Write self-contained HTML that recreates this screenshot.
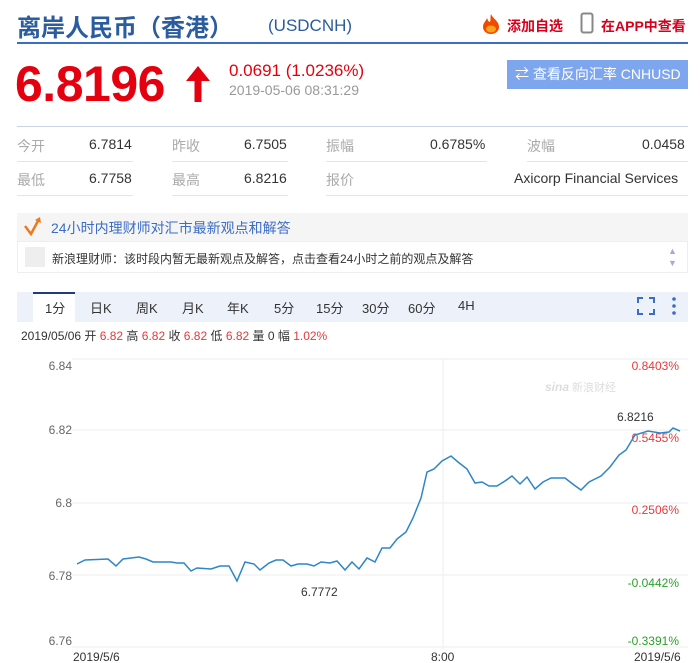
<!DOCTYPE html>
<html><head><meta charset="utf-8"><style>
*{margin:0;padding:0;box-sizing:border-box}
body{width:700px;height:663px;background:#fff;font-family:"Liberation Sans","Noto Sans CJK SC",sans-serif;position:relative;overflow:hidden}
.a{position:absolute;white-space:nowrap}
</style></head><body>
<div class="a" style="left:17px;top:8px;font-size:24px;font-weight:bold;color:#2a5c9f">离岸人民币（香港）</div>
<div class="a" style="left:268px;top:16px;font-size:17px;color:#2a5c9f">(USDCNH)</div>
<svg class="a" style="left:480px;top:13px" width="22" height="22" viewBox="0 0 22 22"><path d="M11 1C13 6 19 8 19 14A8 7 0 0 1 3 14C3 10 6 8 7 5C8 8 9 9 10 9C11 6 10 4 11 1Z" fill="#f04a00"/><ellipse cx="11" cy="16" rx="5" ry="3.5" fill="#f9a21b"/></svg>
<div class="a" style="left:507px;top:16px;font-size:14px;font-weight:bold;color:#d6001c">添加自选</div>
<svg class="a" style="left:580px;top:12px" width="14" height="22"><rect x="1.5" y="1.5" width="11" height="19" rx="2" fill="none" stroke="#888" stroke-width="2"/></svg>
<div class="a" style="left:601px;top:16px;font-size:14px;font-weight:bold;color:#d6001c">在APP中查看</div>
<div class="a" style="left:17px;top:42px;width:671px;height:2px;background:#3b6cc6"></div>
<div class="a" style="left:15px;top:55px;font-size:50px;font-weight:bold;color:#e4000f;letter-spacing:-0.5px">6.8196</div>
<svg class="a" style="left:182px;top:64px" width="32" height="40"><path d="M16 2L28 17H19.5V38H12.5V17H4Z" fill="#e4000f"/></svg>
<div class="a" style="left:229px;top:61px;font-size:17px;color:#e4000f">0.0691 (1.0236%)</div>
<div class="a" style="left:229px;top:82px;font-size:14px;color:#999">2019-05-06 08:31:29</div>
<div class="a" style="left:507px;top:60px;width:181px;height:29px;background:#7ea6ee;color:#fff;font-size:14px;line-height:29px;padding-left:8px">⇄ 查看反向汇率 CNHUSD</div>
<div class="a" style="left:17px;top:126px;width:671px;height:1px;background:#c9d3e3"></div>
<div style="font-size:14px">
<div class="a" style="left:17px;top:136px;color:#aaa">今开</div><div class="a" style="left:89px;top:136px;color:#333">6.7814</div>
<div class="a" style="left:172px;top:136px;color:#aaa">昨收</div><div class="a" style="left:244px;top:136px;color:#333">6.7505</div>
<div class="a" style="left:326px;top:136px;color:#aaa">振幅</div><div class="a" style="left:430px;top:136px;color:#333">0.6785%</div>
<div class="a" style="left:527px;top:136px;color:#aaa">波幅</div><div class="a" style="left:642px;top:136px;color:#333">0.0458</div>
<div class="a" style="left:17px;top:170px;color:#aaa">最低</div><div class="a" style="left:89px;top:170px;color:#333">6.7758</div>
<div class="a" style="left:172px;top:170px;color:#aaa">最高</div><div class="a" style="left:244px;top:170px;color:#333">6.8216</div>
<div class="a" style="left:326px;top:170px;color:#aaa">报价</div><div class="a" style="left:514px;top:170px;color:#333">Axicorp Financial Services</div>
</div>
<div class="a" style="left:17px;top:161px;width:116px;height:1px;background:#e5e5e5"></div>
<div class="a" style="left:172px;top:161px;width:116px;height:1px;background:#e5e5e5"></div>
<div class="a" style="left:326px;top:161px;width:161px;height:1px;background:#e5e5e5"></div>
<div class="a" style="left:527px;top:161px;width:161px;height:1px;background:#e5e5e5"></div>
<div class="a" style="left:17px;top:195px;width:116px;height:1px;background:#e5e5e5"></div>
<div class="a" style="left:172px;top:195px;width:116px;height:1px;background:#e5e5e5"></div>
<div class="a" style="left:326px;top:195px;width:362px;height:1px;background:#e5e5e5"></div>
<div class="a" style="left:17px;top:213px;width:671px;height:28px;background:#f5f5f5"></div>
<svg class="a" style="left:23px;top:216px" width="20" height="20"><path d="M2 10L8 18L16 3" fill="none" stroke="#f07a1a" stroke-width="2.5"/><path d="M12 4L17 1L18 7Z" fill="#f07a1a"/></svg>
<div class="a" style="left:51px;top:218px;font-size:14px;color:#3b6cc6">24小时内理财师对汇市最新观点和解答</div>
<div class="a" style="left:17px;top:241px;width:671px;height:32px;background:#fff;border:1px solid #eee"></div>
<div class="a" style="left:25px;top:247px;width:20px;height:20px;background:#eee"></div>
<div class="a" style="left:52px;top:250px;font-size:12px;color:#333">新浪理财师：该时段内暂无最新观点及解答，点击查看24小时之前的观点及解答</div>
<div class="a" style="left:668px;top:245px;font-size:9px;color:#aac;line-height:12px">▲<br>▼</div>
<div class="a" style="left:17px;top:292px;width:671px;height:30px;background:#edf2fa"></div>
<div class="a" style="left:33px;top:292px;width:42px;height:30px;background:#fff;border-top:2px solid #1c3f7c"></div>
<div style="font-size:13px;color:#333">
<div class="a" style="left:45px;top:298px">1分</div><div class="a" style="left:90px;top:298px">日K</div><div class="a" style="left:136px;top:298px">周K</div><div class="a" style="left:182px;top:298px">月K</div><div class="a" style="left:227px;top:298px">年K</div><div class="a" style="left:274px;top:298px">5分</div><div class="a" style="left:316px;top:298px">15分</div><div class="a" style="left:362px;top:298px">30分</div><div class="a" style="left:408px;top:298px">60分</div><div class="a" style="left:458px;top:298px">4H</div>
</div>
<svg class="a" style="left:636px;top:296px" width="20" height="20"><path d="M2 7V2H7M13 2H18V7M18 13V18H13M7 18H2V13" fill="none" stroke="#3b6cc6" stroke-width="2"/></svg>
<svg class="a" style="left:671px;top:296px" width="6" height="20"><circle cx="3" cy="3" r="1.8" fill="#3b6cc6"/><circle cx="3" cy="10" r="1.8" fill="#3b6cc6"/><circle cx="3" cy="17" r="1.8" fill="#3b6cc6"/></svg>
<div class="a" style="left:21px;top:327px;font-size:12px;color:#333">2019/05/06 开 <span style="color:#e4393c">6.82</span> 高 <span style="color:#e4393c">6.82</span> 收 <span style="color:#e4393c">6.82</span> 低 <span style="color:#e4393c">6.82</span> 量 0 幅 <span style="color:#e4393c">1.02%</span></div>
<svg class="a" style="left:0;top:350px" width="700" height="313" viewBox="0 350 700 313" font-family="Liberation Sans,sans-serif" font-size="12">
<g stroke="#eee" stroke-width="1"><line x1="72" y1="359" x2="688" y2="359"/><line x1="72" y1="430" x2="688" y2="430"/><line x1="72" y1="503" x2="688" y2="503"/><line x1="72" y1="575" x2="688" y2="575"/><line x1="72" y1="647" x2="688" y2="647"/><line x1="443" y1="359" x2="443" y2="650"/></g>
<g fill="#666" text-anchor="end"><text x="72" y="370">6.84</text><text x="72" y="434">6.82</text><text x="72" y="507">6.8</text><text x="72" y="580">6.78</text><text x="72" y="645">6.76</text></g>
<g text-anchor="end"><text x="679" y="370" fill="#e4393c">0.8403%</text><text x="679" y="442" fill="#e4393c">0.5455%</text><text x="679" y="514" fill="#e4393c">0.2506%</text><text x="679" y="587" fill="#2aa02a">-0.0442%</text><text x="679" y="645" fill="#2aa02a">-0.3391%</text></g>
<text x="545" y="391" fill="#ddd" font-size="12" font-style="italic" font-weight="bold">sina</text><text x="572" y="391" fill="#ddd" font-size="11" font-family="Noto Sans CJK SC">新浪财经</text>
<polyline fill="none" stroke="#2d86c8" stroke-width="1.5" points="77,564 85,560 108,559 116,566 123,559 139,557 146,559 153,562 171,562 177,563 184,563 191,571 197,568 211,569 220,566 229,566 237,581 245,562 254,564 260,570 269,563 276,560 283,560 291,566 298,564 307,564 314,566 321,562 330,563 337,561 345,570 352,562 359,569 367,558 375,562 382,548 390,548 397,539 406,532 413,518 421,498 427,472 434,469 442,461 451,456 458,462 467,469 475,483 482,482 489,486 497,486 505,481 512,476 520,484 527,477 535,489 543,482 551,478 565,478 574,485 581,490 589,482 601,476 610,467 619,455 626,450 635,435 648,431 660,433 669,432 673,428 680,431"/>
<text x="301" y="596" fill="#333">6.7772</text>
<text x="617" y="421" fill="#333">6.8216</text>
<g fill="#333" font-size="12"><text x="73" y="661">2019/5/6</text><text x="431" y="661">8:00</text><text x="634" y="661">2019/5/6</text></g>
</svg>
</body></html>
